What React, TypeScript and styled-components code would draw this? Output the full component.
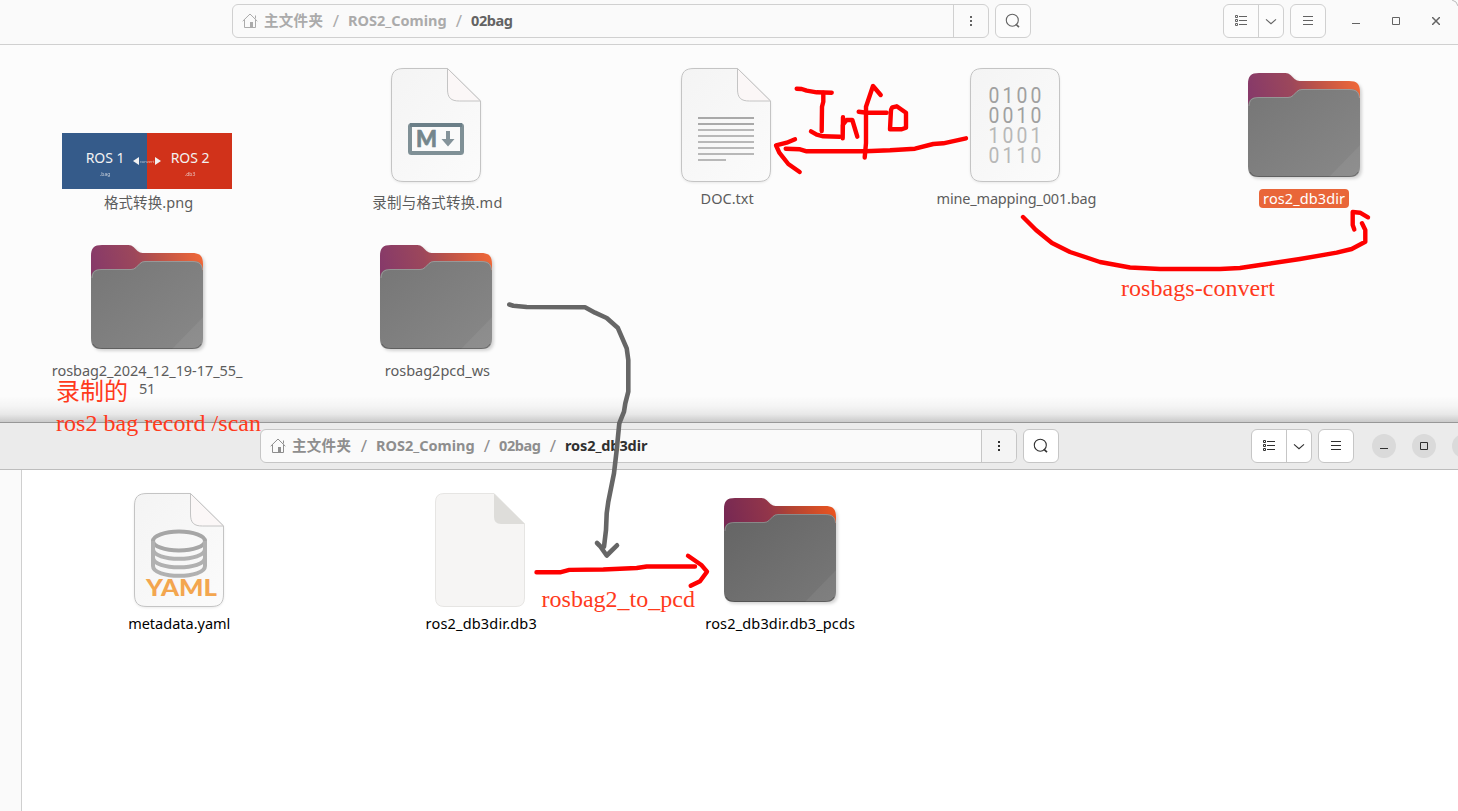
import React from 'react';
import styled, { createGlobalStyle, css } from 'styled-components';

const uiFont = '"Noto Sans", "Noto Sans CJK SC", sans-serif';

const Global = createGlobalStyle`
  * { box-sizing: border-box; }
  html, body { margin: 0; padding: 0; background: #fcfcfc; overflow: hidden; }
`;

const Desktop = styled.div`
  position: relative;
  width: 1458px;
  height: 811px;
  overflow: hidden;
  font-family: ${uiFont};
  display: flex;
  flex-direction: column;
`;

type Tone = { $active?: boolean };

const Win = styled.section<Tone>`
  position: relative;
  display: flex;
  flex-direction: column;
  --ink: ${p => (p.$active ? '#303030' : '#636363')};
  --crumb: ${p => (p.$active ? '#8e8e8e' : '#ababab')};
  --line: ${p => (p.$active ? '#c6c6c6' : '#d0d0d0')};
  --btn: ${p => (p.$active ? '#ffffff' : '#fcfcfc')};
  --label: ${p => (p.$active ? '#000' : '#5c5c5c')};
  ${p =>
    p.$active
      ? css`
          flex: 1;
          background: #fff;
          border-top: 1px solid #979797;
        `
      : css`
          height: 422px;
          background: #fcfcfc;
        `}
`;

const WinShadow = styled.div`
  position: absolute;
  left: 0;
  right: 0;
  bottom: 0;
  height: 26px;
  background: linear-gradient(rgba(0, 0, 0, 0), rgba(0, 0, 0, 0.03) 40%, rgba(0, 0, 0, 0.08) 70%, rgba(0, 0, 0, 0.2));
`;

const Header = styled.header<Tone>`
  flex: none;
  display: flex;
  align-items: flex-start;
  height: ${p => (p.$active ? 47 : 45)}px;
  padding: ${p => (p.$active ? '6px 0 0 260px' : '4px 0 0 232px')};
  background: ${p => (p.$active ? '#ebebeb' : '#fafafa')};
  border-bottom: 1px solid ${p => (p.$active ? '#bdbdbd' : '#d0d0d0')};
  overflow: hidden;
`;

const PathBar = styled.div`
  display: flex;
  flex: none;
  width: 757px;
  height: 34px;
  border: 1px solid var(--line);
  border-radius: 6px;
  background: #fafafa;
  overflow: hidden;
`;

const Crumbs = styled.nav`
  flex: 1;
  display: flex;
  align-items: center;
  padding-left: 9px;
`;

const Crumb = styled.span<{ $w: number; $ls?: number; $current?: boolean }>`
  width: ${p => p.$w}px;
  height: 32px;
  font-size: 14.5px;
  font-weight: 700;
  line-height: 30px;
  white-space: nowrap;
  letter-spacing: ${p => p.$ls ?? 0}px;
  color: ${p => (p.$current ? 'var(--ink)' : 'var(--crumb)')};
`;

const Slash = styled.span`
  width: 24px;
  text-align: center;
  font-size: 17px;
  line-height: 32px;
  color: var(--crumb);
`;

const HomeSlot = styled.span`
  display: flex;
  width: 22px;
  color: var(--crumb);
`;

const Cell = styled.button<{ $w: number; $divided?: boolean; $tint?: string }>`
  display: flex;
  align-items: center;
  justify-content: center;
  width: ${p => p.$w}px;
  height: 32px;
  padding: 0;
  border: 0;
  border-left: ${p => (p.$divided ? '1px solid var(--line)' : '0')};
  background: ${p => p.$tint ?? 'transparent'};
  color: var(--ink);
`;

const Group = styled.div<{ $gap: number }>`
  display: flex;
  flex: none;
  height: 34px;
  margin-left: ${p => p.$gap}px;
  border: 1px solid var(--line);
  border-radius: 6px;
  background: var(--btn);
`;

const Controls = styled.div`
  display: flex;
  flex: none;
  gap: 16px;
  margin: 5px 0 0 18px;
`;

const Control = styled.button<Tone>`
  display: flex;
  flex: none;
  align-items: center;
  justify-content: center;
  width: 24px;
  height: 24px;
  padding: 0;
  border: 0;
  border-radius: 50%;
  background: ${p => (p.$active ? '#dadada' : 'transparent')};
  color: var(--ink);
`;

const Corner = styled.svg`
  position: absolute;
  top: 0;
  right: 0;
`;

const Body = styled.div`
  flex: 1;
  display: flex;
`;

const SideStrip = styled.div`
  width: 22px;
  background: #fafafa;
  border-right: 1px solid #cfcfcf;
`;

const Files = styled.div<{ $cols: number; $pitch: number; $left: number }>`
  display: grid;
  grid-template-columns: repeat(${p => p.$cols}, ${p => p.$pitch}px);
  grid-auto-rows: 155px;
  row-gap: 17px;
  padding: 16px 0 0 ${p => p.$left}px;
`;

const File = styled.div`
  display: flex;
  flex-direction: column;
  align-items: center;
`;

const IconSlot = styled.div<{ $end?: boolean }>`
  display: flex;
  flex: none;
  align-items: ${p => (p.$end ? 'flex-end' : 'center')};
  height: 128px;
`;

const Label = styled.div<{ $cjk?: boolean; $selected?: boolean; $ls?: number; $dx?: number }>`
  margin-top: ${p => (p.$selected ? 0 : 1)}px;
  padding: ${p => (p.$selected ? '0 4px' : '0')};
  font-size: 14.5px;
  line-height: ${p => (p.$cjk ? 24 : p.$selected ? 19 : 17.5)}px;
  letter-spacing: ${p => p.$ls ?? 0}px;
  text-align: center;
  white-space: pre;
  margin-left: ${p => p.$dx ?? 0}px;
  border-radius: 4px;
  color: ${p => (p.$selected ? '#fff' : 'var(--label)')};
  background: ${p => (p.$selected ? '#e96639' : 'transparent')};
`;

const Thumb = styled.div`
  display: flex;
  position: relative;
  width: 170px;
  height: 56px;
`;

const ThumbHalf = styled.div<{ $bg: string }>`
  width: 85px;
  padding: 15px 0 0 1px;
  background: ${p => p.$bg};
  color: #f2f2f2;
  text-align: center;
  font-size: 14px;
  line-height: 20px;
`;

const ThumbExt = styled.div`
  margin-top: 2px;
  font-size: 5px;
  line-height: 8px;
  opacity: 0.75;
`;

const ThumbArrow = styled.svg`
  position: absolute;
  left: 71px;
  top: 23px;
`;

const Ink = styled.svg`
  position: absolute;
  inset: 0;
  pointer-events: none;
`;

const HomeIcon = () => (
  <svg width="16" height="16" viewBox="0 0 16 16" fill="none" stroke="currentColor">
    <path d="M0.7 8.2 8 1l7.3 7.2M2.5 6.8v7.7h11V6.8M13.5 5.5V2.5" />
    <path d="M8 9h3v5.5H8z" fill="currentColor" stroke="none" />
  </svg>
);

const DotsIcon = () => (
  <svg width="16" height="16" fill="currentColor">
    <path d="M7 3h2v2H7zM7 7h2v2H7zM7 11h2v2H7z" />
  </svg>
);

const SearchIcon = () => (
  <svg width="16" height="16" fill="none" stroke="currentColor" strokeWidth="1.1">
    <circle cx="7.3" cy="7.2" r="6" />
    <path d="M10.8 11.2 14 14.2" strokeWidth="1.6" />
  </svg>
);

const ListIcon = () => (
  <svg width="14" height="14" fill="none" stroke="currentColor">
    <path d="M1.5 1.5h2v2h-2zM1.5 5.5h2v2h-2zM1.5 9.5h2v2h-2z" />
    <path d="M5 2.5h8M5 6.5h8M5 10.5h8" />
  </svg>
);

const ChevronIcon = () => (
  <svg width="12" height="12" fill="none" stroke="currentColor" strokeWidth="1.1">
    <path d="m1 4.3 5 4.4 5-4.4" />
  </svg>
);

const MenuIcon = () => (
  <svg width="12" height="12" stroke="currentColor">
    <path d="M1 1.5h10M1 5.5h10M1 9.5h10" />
  </svg>
);

const MinIcon = () => (
  <svg width="8" height="8" stroke="currentColor">
    <path d="M0 6.5h8" />
  </svg>
);

const MaxIcon = () => (
  <svg width="8" height="8" stroke="currentColor" fill="none">
    <path d="M.5.5h7v7h-7z" />
  </svg>
);

const CloseIcon = () => (
  <svg width="8" height="8" stroke="currentColor" strokeWidth="1.5">
    <path d="m0 0 8 8M8 0 0 8" />
  </svg>
);

const FolderIcon = ({ id, faded }: { id: string; faded?: boolean }) => (
  <svg width="124" height="116" viewBox="-6 -6 124 116">
    <defs>
      <linearGradient id={`${id}b`} gradientUnits="userSpaceOnUse" x1="4" y1="30" x2="108" y2="4">
        <stop offset="0" stopColor={faded ? '#873a69' : '#772953'} />
        <stop offset="0.4" stopColor={faded ? '#9c475b' : '#92354a'} />
        <stop offset="0.6" stopColor={faded ? '#b9524a' : '#b04334'} />
        <stop offset="1" stopColor={faded ? '#ee6738' : '#e95420'} />
      </linearGradient>
      <linearGradient id={`${id}f`} x1="0" y1="0" x2="1" y2="1">
        <stop offset="0" stopColor={faded ? '#767676' : '#646464'} />
        <stop offset="1" stopColor={faded ? '#888888' : '#787878'} />
      </linearGradient>
    </defs>
    <g style={{ filter: 'drop-shadow(2px 2px 1.5px rgba(0,0,0,.16))' }}>
      <path
        d="M0 32V11C0 3 3 0 11 0h26.500q3 0 5 2l4 4q2.500 2 5 2H101c8 0 11 3 11 11v60H0z"
        fill={`url(#${id}b)`}
      />
      <path
        d="M0 35c0-8 3-11 11-11h29q3 0 5-2l4-4q2-2 5-2h47c8 0 11 3 11 11v66c0 8-3 11-11 11H11c-8 0-11-3-11-11z"
        fill={`url(#${id}f)`}
      />
    </g>
    <path d="M112 72v21c0 8-3 11-11 11H81z" fill="#fff" opacity="0.06" />
    <path d="M1 33c.5-6 3-8.500 10-8.500h29q3 0 5-2l4-4q2-2 5-2h47c7 0 10 2.500 10.500 8.500" fill="none" stroke="#fff" opacity="0.22" />
    <path d="M2 99c2 3.500 5 4.500 9 4.500h90c4 0 7-1 9-4.500" fill="none" stroke="#000" opacity="0.25" />
  </svg>
);

const DocBase = ({ id, folded = true, children }: { id: string; folded?: boolean; children: React.ReactNode }) => (
  <svg width="98" height="122" viewBox="-4 -4 98 122">
    <defs>
      <linearGradient id={id} x1="0" y1="0" x2="1" y2="1">
        <stop offset="0" stopColor="#f4f4f4" />
        <stop offset="1" stopColor="#fbfbfb" />
      </linearGradient>
    </defs>
    <path
      d={
        folded
          ? 'M.5 13C.5 4 4 .5 13 .5h43.500L89.500 33v68c0 9-3.500 12.500-12.500 12.500H13C4 113.500.5 110 .5 101z'
          : 'M.5 13C.5 4 4 .5 13 .5h64C86 .5 89.500 4 89.500 13v88c0 9-3.500 12.500-12.500 12.500H13C4 113.500.5 110 .5 101z'
      }
      fill={`url(#${id})`}
      stroke="#c4c4c4"
      style={{ filter: 'drop-shadow(0 1px 1px rgba(0,0,0,.08))' }}
    />
    {folded && <path d="M56.500.5V21c0 9 3.500 12 12 12h21z" fill="#fbf7f7" stroke="#c4c4c4" />}
    {children}
  </svg>
);

const MarkdownIcon = () => (
  <DocBase id="md">
    <rect x="19" y="57" width="52" height="28" rx="1.500" fill="#fafafa" stroke="#7f9096" strokeWidth="4" />
    <path d="M19 57h52" stroke="#6b7f88" strokeWidth="4" />
    <text x="25" y="79" fontFamily="Lato" fontWeight="900" fontSize="22" textLength="21" lengthAdjust="spacingAndGlyphs" fill="#74868c" stroke="#74868c" strokeWidth="0.600">M</text>
    <path d="M55 63h4v8h4.500L57 78.500 50.500 71H55z" fill="#84939a" />
  </DocBase>
);

const TextIcon = () => (
  <DocBase id="txt">
    {[0, 1, 2, 3, 4, 5, 6, 7].map(i => (
      <path key={i} d={`M17 ${50 + i * 6}H${i === 7 ? 45 : 73}`} stroke={i < 2 ? '#a9a9a9' : '#b8b8b8'} strokeWidth="2" />
    ))}
  </DocBase>
);

const BinaryIcon = () => (
  <DocBase id="bin" folded={false}>
    <g transform="scale(.88 1)" textAnchor="middle" fontFamily="Roboto" fontSize="22">
      {['0100', '0010', '1001', '0110'].map((row, r) => (
        <text key={r} x="27.3 43.2 59.1 75" y={35 + r * 20} fill={r < 2 ? '#a0a0a0' : '#b8b8b8'}>
          {row}
        </text>
      ))}
    </g>
  </DocBase>
);

const YamlIcon = () => (
  <DocBase id="yml">
    <g fill="none" stroke="#b1b1b1" strokeWidth="4">
      <ellipse cx="45" cy="48" rx="26" ry="9.500" stroke="#a6a6a6" />
      <path d="M19 48v25c0 13 52 13 52 0V48" />
      <path d="M19 56c0 13 52 13 52 0M19 64.500c0 13 52 13 52 0" />
    </g>
    <text x="12" y="103" fontFamily="Lato" fontWeight="900" fontSize="22" textLength="71" lengthAdjust="spacingAndGlyphs" fill="#f3a64f">YAML</text>
  </DocBase>
);

const BlankIcon = () => (
  <svg width="90" height="114">
    <path d="M.5 9q0-8.500 8.500-8.500h50L89.500 31v74q0 8.500-8.500 8.500H9q-8.500 0-8.500-8.500z" fill="#f6f5f4" stroke="#e6e5e3" />
    <path d="M59 .5 90 31H66q-7 0-7-7z" fill="#deddda" />
  </svg>
);

const Thumbnail = () => (
  <Thumb>
    <ThumbHalf $bg="#355b8a">
      ROS 1<ThumbExt>.bag</ThumbExt>
    </ThumbHalf>
    <ThumbHalf $bg="#d1321a">
      ROS 2<ThumbExt>.db3</ThumbExt>
    </ThumbHalf>
    <ThumbArrow width="30" height="10" fill="#f2f2f2">
      <path d="M0 5 6 1v8zM28 5l-6-4v8z" />
      <text x="14" y="6.500" fontSize="4" textAnchor="middle" opacity="0.7">convert</text>
    </ThumbArrow>
  </Thumb>
);

type CrumbData = { text: string; w: number; ls?: number };

const WindowHeader = ({ crumbs, active }: { crumbs: CrumbData[]; active?: boolean }) => (
  <Header $active={active}>
    <PathBar>
      <Crumbs>
        <HomeSlot><HomeIcon /></HomeSlot>
        {crumbs.map((c, i) => (
          <React.Fragment key={c.text}>
            {i > 0 && <Slash>/</Slash>}
            <Crumb $w={c.w} $ls={c.ls} $current={i === crumbs.length - 1}>{c.text}</Crumb>
          </React.Fragment>
        ))}
      </Crumbs>
      <Cell $w={35} $divided $tint={active ? '#f4f4f4' : undefined}><DotsIcon /></Cell>
    </PathBar>
    <Group $gap={6}><Cell $w={34}><SearchIcon /></Cell></Group>
    <Group $gap={192}>
      <Cell $w={34}><ListIcon /></Cell>
      <Cell $w={25} $divided><ChevronIcon /></Cell>
    </Group>
    <Group $gap={6}><Cell $w={34}><MenuIcon /></Cell></Group>
    <Controls>
      <Control $active={active}><MinIcon /></Control>
      <Control $active={active}><MaxIcon /></Control>
      <Control $active={active}><CloseIcon /></Control>
    </Controls>
  </Header>
);

const redStrokes = [
  '796.7,88.7 801.7,89 806.7,90.7 816.7,92.300 831.7,92.700',
  '823.3,92.7 823.3,101.7 822,106.7 821.7,131',
  '811,131.3 816.7,134.7 823.3,136.3 840,136.7',
  '843,117.3 842.7,138.3 842.7,125 846.7,120 852.3,120 857.3,136.7',
  '880.7,95 873,86 866,106.7 866,143 864.7,157.5',
  '858.7,111.7 866.7,112.7 886.7,112.7',
  '891,110 890,129.3 901.7,129.3 906,127.7 906,112.7 896.7,106.3 892.3,107.3 891,110',
  '966,138.3 943.3,143.3 933.3,144 915,148.7 890,150.3 865,151.3 806.7,151.3 800,149.3 785.7,148.7',
  '795,139.3 786.7,142.7 776,145.3 779.3,152.7 788.3,164 799.7,172',
  '1023,217 1036,230 1052,243 1070,252 1100,262 1130,267.5 1160,269 1220,269 1240,268 1260,265 1300,259 1336.7,252.7 1351.7,249 1365.3,241.7 1365.3,230 1362,223.3',
  '1368,217.300 1360,212.7 1352.7,212 1352.7,225 1354.3,229.500',
  '536.5,572.3 560,572.3 569.3,569.9 603.3,569.5 636.7,568 646.7,566.5 695,566.5',
  '688,555.7 701.7,565.3 707,571.7 700,581.3 690.7,585.7',
];

const Annotations = () => (
  <Ink width="1458" height="811" fill="none" strokeLinecap="round" strokeLinejoin="round">
    <g stroke="#fe0000" strokeWidth="4.400">
      {redStrokes.map(s => <polyline key={s} points={s} />)}
    </g>
    <g stroke="#666" strokeWidth="4.600">
      <polyline points="509.3,304.5 513.3,305.7 526.7,307 585,307.3 595,312.7 606.7,318 617.7,327.7 626.7,348.3 628.3,360 628.3,391.7 625.3,403.3 624,411.7 619.3,423.3 616.7,450 614,473.3 608.3,501.7 606.7,513.3 606,530 604,546.7" />
      <polyline points="597,543 600,546 606.7,555.500 617,545.300" />
    </g>
    <g fill="#ff3a1c" fontFamily='"Liberation Serif", "Noto Sans CJK SC", serif' fontSize="24">
      <text x="1121" y="296" textLength="154">rosbags-convert</text>
      <text x="541.5" y="607" textLength="153.5">rosbag2_to_pcd</text>
      <text x="56" y="400" textLength="72">录制的</text>
      <text x="56" y="431" textLength="205">ros2 bag record /scan</text>
    </g>
  </Ink>
);

const App = () => (
  <>
    <Global />
    <Desktop>
      <Win>
        <WindowHeader
          crumbs={[
            { text: '主文件夹', w: 60, ls: 0.3 },
            { text: 'ROS2_Coming', w: 99 },
            { text: '02bag', w: 50, ls: -0.4 },
          ]}
        />
        <Corner width="8" height="8" fill="none" stroke="#bbb"><path d="M2 0q5 1 6 6" /></Corner>
        <Files $cols={5} $pitch={289.25} $left={2.5}>
          <File>
            <IconSlot $end><Thumbnail /></IconSlot>
            <Label $cjk $dx={3} $ls={0.1}>格式转换.png</Label>
          </File>
          <File>
            <IconSlot><MarkdownIcon /></IconSlot>
            <Label $cjk $dx={2} $ls={0.25}>录制与格式转换.md</Label>
          </File>
          <File>
            <IconSlot><TextIcon /></IconSlot>
            <Label $dx={3}>DOC.txt</Label>
          </File>
          <File>
            <IconSlot><BinaryIcon /></IconSlot>
            <Label $dx={3} $ls={-0.18}>mine_mapping_001.bag</Label>
          </File>
          <File>
            <IconSlot><FolderIcon id="f1" faded /></IconSlot>
            <Label $selected $ls={0.1}>ros2_db3dir</Label>
          </File>
          <File>
            <IconSlot><FolderIcon id="f2" faded /></IconSlot>
            <Label $ls={-0.06}>{'rosbag2_2024_12_19-17_55_\n51'}</Label>
          </File>
          <File>
            <IconSlot><FolderIcon id="f3" faded /></IconSlot>
            <Label $dx={2}>rosbag2pcd_ws</Label>
          </File>
        </Files>
        <WinShadow />
      </Win>
      <Win $active>
        <WindowHeader
          active
          crumbs={[
            { text: '主文件夹', w: 60, ls: 0.3 },
            { text: 'ROS2_Coming', w: 99 },
            { text: '02bag', w: 42, ls: -0.4 },
            { text: 'ros2_db3dir', w: 90, ls: -0.1 },
          ]}
        />
        <Body>
          <SideStrip />
          <Files $cols={3} $pitch={300.5} $left={7}>
            <File>
              <IconSlot><YamlIcon /></IconSlot>
              <Label>metadata.yaml</Label>
            </File>
            <File>
              <IconSlot><BlankIcon /></IconSlot>
              <Label $dx={3} $ls={0.18}>ros2_db3dir.db3</Label>
            </File>
            <File>
              <IconSlot><FolderIcon id="f4" /></IconSlot>
              <Label $ls={0.15}>ros2_db3dir.db3_pcds</Label>
            </File>
          </Files>
        </Body>
      </Win>
      <Annotations />
    </Desktop>
  </>
);

export default App;
